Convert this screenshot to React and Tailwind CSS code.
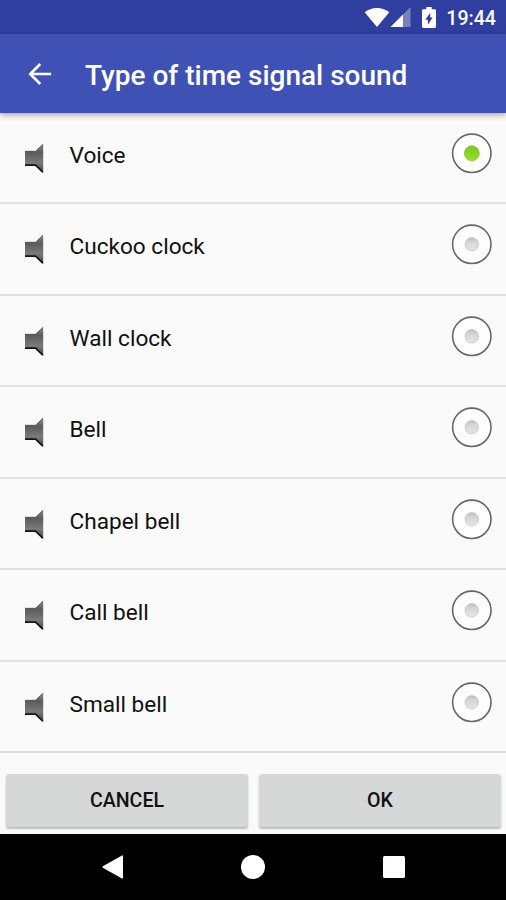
import { useState } from 'react';

const sounds = ['Voice', 'Cuckoo clock', 'Wall clock', 'Bell', 'Chapel bell', 'Call bell', 'Small bell'];

function StatusBar() {
  return (
    <div className="flex h-[34px] shrink-0 items-center justify-end bg-[#303f9f] pr-[10px] text-white">
      {/* Wifi */}
      <svg className="h-[20px] w-[26px]" viewBox="0 0 26 20" fill="currentColor">
        <path d="M.7 5.2C4 2.500 8.200.9 13 .9s9 1.600 12.300 4.300L13 20z" />
      </svg>
      {/* Mobile signal */}
      <svg className="h-[20px] w-[21px]" viewBox="0 0 21 20" fill="currentColor">
        <path d="M20.500 0v20H.5z" opacity=".35" />
        <path d="M13 7.500V20H.5z" />
      </svg>
      {/* Battery */}
      <svg className="ml-[11px] h-[21px] w-[14px]" viewBox="0 0 14 21">
        <path d="M4.300 0h5.400v2.200H12.600q1.400 0 1.400 1.400v16q0 1.400-1.400 1.400H1.400Q0 21 0 19.600v-16q0-1.400 1.400-1.400H4.300z" fill="#fff" />
        <path d="M8.200 5.800v4.700h2.500L5.900 17.800v-5H3.300z" fill="#303f9f" />
      </svg>
      <span className="ml-[10px] pt-[3px] text-[19.600px] leading-none font-medium">19:44</span>
    </div>
  );
}

function SpeakerIcon() {
  return (
    <svg className="h-[31px] w-[19px]" viewBox="0 0 19 31">
      <defs>
        <linearGradient id="speaker" x1="0" y1="0" x2="0" y2="1">
          <stop offset="0" stopColor="#8c8c8c" />
          <stop offset=".3" stopColor="#5c5c5c" />
          <stop offset=".65" stopColor="#7a7a7a" />
          <stop offset="1" stopColor="#444" />
        </linearGradient>
      </defs>
      <path d="M0 8h10.500L18.200.7V30L10.500 23H0z" fill="url(#speaker)" />
      <path d="M0 8.300h10.600L17.800 1.500" fill="none" stroke="#555" strokeWidth=".8" />
      <path d="M0 22.200h10.600l7.200 7" fill="none" stroke="#161616" strokeWidth="1.800" />
    </svg>
  );
}

function Radio({ checked }) {
  return (
    <svg className="h-[41px] w-[41px]" viewBox="0 0 41 41">
      <defs>
        <linearGradient id="dot-on" x1="0" y1="0" x2="0" y2="1">
          <stop offset="0" stopColor="#7cc520" />
          <stop offset="1" stopColor="#95e029" />
        </linearGradient>
        <linearGradient id="dot-off" x1="0" y1="0" x2="0" y2="1">
          <stop offset="0" stopColor="#bdbdbd" />
          <stop offset=".3" stopColor="#d4d4d4" />
          <stop offset="1" stopColor="#e6e6e6" />
        </linearGradient>
      </defs>
      <circle cx="20.800" cy="20.300" r="19.200" fill="#fdfdfd" stroke="#666" strokeWidth="1.600" />
      {checked ? (
        <circle cx="20.800" cy="20.300" r="7.500" fill="url(#dot-on)" stroke="#72b81d" strokeWidth=".6" />
      ) : (
        <circle cx="20.800" cy="20.300" r="6.700" fill="url(#dot-off)" stroke="#c4c4c4" strokeWidth=".8" />
      )}
    </svg>
  );
}

export default function App() {
  const [selected, setSelected] = useState('Voice');

  return (
    <div className="flex h-[900px] w-[506px] flex-col overflow-hidden bg-[#fafafa] font-[Roboto,sans-serif]">
      <StatusBar />

      <header className="relative flex h-[79px] shrink-0 items-center bg-[#3f51b5] pl-[28px] text-white shadow-[0_2px_6px_rgba(0,0,0,0.35)]">
        <svg className="h-[24px] w-[24px]" viewBox="0 0 24 24" fill="none" stroke="currentColor" strokeWidth="2.600">
          <path d="M23.200 12H2.500M12.200 2 2.200 12l10 10" />
        </svg>
        <h1 className="ml-[33px] pt-[4px] text-[28px] leading-none font-medium whitespace-nowrap">
          Type of time signal sound
        </h1>
      </header>

      <ul className="h-[641px] shrink-0">
        {sounds.map((name) => (
          <li key={name} className="h-[91.430px] border-b-2 border-[#e0e0e0]">
            <button
              onClick={() => setSelected(name)}
              className="flex w-full items-start pt-[20px] pr-[14px] pl-[25px] text-left text-[#111]"
            >
              <span className="pt-[10px]">
                <SpeakerIcon />
              </span>
              <span className="ml-[25.500px] flex-1 pt-[8px] text-[22.600px] leading-[30px]">{name}</span>
              <Radio checked={name === selected} />
            </button>
          </li>
        ))}
      </ul>

      <div className="flex h-[80px] shrink-0 gap-[11px] pt-[20px] pr-[5px] pl-[6px]">
        <button className="h-[53px] flex-1 rounded-[3px] bg-[#d6d7d7] text-[19.600px] font-medium text-[#111] shadow-[0_2px_2px_rgba(0,0,0,0.25)]">
          CANCEL
        </button>
        <button className="h-[53px] flex-1 rounded-[3px] bg-[#d6d7d7] text-[19.600px] font-medium text-[#111] shadow-[0_2px_2px_rgba(0,0,0,0.25)]">
          OK
        </button>
      </div>

      {/* Navigation bar */}
      <nav className="flex flex-1 items-center justify-center gap-[118px] bg-black">
        <svg className="h-[24px] w-[22px]" viewBox="0 0 22 24" fill="#fff">
          <path d="M22 1v22q0 1-1 .5L1.800 12.700Q1 12 1.800 11.300L21 .5q1-.5 1 .5z" />
        </svg>
        <div className="h-[24px] w-[24px] rounded-full bg-white" />
        <div className="h-[22px] w-[22px] rounded-[1.500px] bg-white" />
      </nav>
    </div>
  );
}
